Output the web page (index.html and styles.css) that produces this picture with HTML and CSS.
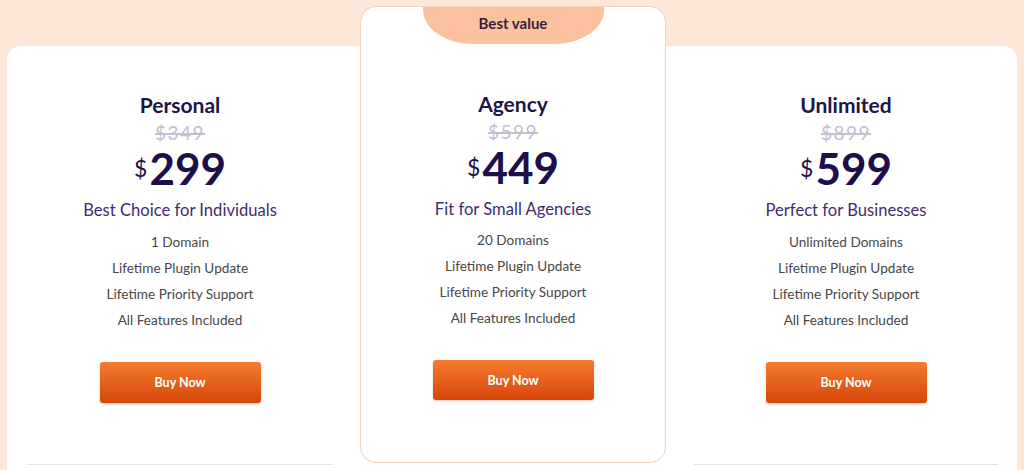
FILE: index.html
```html
<!DOCTYPE html>
<html lang="en">
<head>
  <meta charset="UTF-8" />
  <meta name="viewport" content="width=device-width, initial-scale=1.0"/>
  <title>Pricing</title>
  <link rel="stylesheet" href="styles.css">
</head>
<body>
  <div class="board">
    <div class="plan">
      <h2 class="plan-name">Personal</h2>
      <div class="old-price">$349</div>
      <div class="price"><span class="currency">$</span>299</div>
      <p class="plan-note">Best Choice for Individuals</p>
      <ul class="features">
        <li>1 Domain</li>
        <li>Lifetime Plugin Update</li>
        <li>Lifetime Priority Support</li>
        <li>All Features Included</li>
      </ul>
      <button class="buy-btn">Buy Now</button>
    </div>

    <div class="plan plan-featured">
      <div class="badge">Best value</div>
      <h2 class="plan-name">Agency</h2>
      <div class="old-price">$599</div>
      <div class="price"><span class="currency">$</span>449</div>
      <p class="plan-note">Fit for Small Agencies</p>
      <ul class="features">
        <li>20 Domains</li>
        <li>Lifetime Plugin Update</li>
        <li>Lifetime Priority Support</li>
        <li>All Features Included</li>
      </ul>
      <button class="buy-btn">Buy Now</button>
    </div>

    <div class="plan">
      <h2 class="plan-name">Unlimited</h2>
      <div class="old-price">$899</div>
      <div class="price"><span class="currency">$</span>599</div>
      <p class="plan-note">Perfect for Businesses</p>
      <ul class="features">
        <li>Unlimited Domains</li>
        <li>Lifetime Plugin Update</li>
        <li>Lifetime Priority Support</li>
        <li>All Features Included</li>
      </ul>
      <button class="buy-btn">Buy Now</button>
    </div>
  </div>
</body>
</html>
```

FILE: styles.css
```css
/* ======= Page ======= */
body {
  margin: 0;
  background: #fde7d8;
  font-family: Lato, "Noto Sans", sans-serif;
  text-align: center;
  overflow: hidden;
}

.board {
  display: grid;
  grid-template-columns: 346px 305px 344px;
  column-gap: 8px;
  align-items: start;
  margin: 46px 7px 0 7px;
  height: 440px;
  background: #fff;
  border-radius: 14px 14px 0 0;
}

/* ======= Plan column ======= */
.plan {
  display: flex;
  flex-direction: column;
  align-items: center;
  margin: 0 20px;
  padding: 45px 0 61px;
  border-bottom: 1px solid #e4e2e2;
}

.plan-featured {
  margin: -40px 0 0 -1px;
  padding: 0 0 62px;
  border: 1.5px solid #f0d3bd;
  border-radius: 16px;
  background: #fff;
}
.plan-featured .features {
  margin-top: 6px;
}
.plan-featured .buy-btn {
  height: 40px;
}

.badge {
  width: 181px;
  height: 37px;
  line-height: 33px;
  margin-bottom: 46px;
  background: #fcc29f;
  border-radius: 0 0 50px 50px / 0 0 34px 34px;
  color: #3a1d3c;
  font-size: 15px;
  font-weight: 700;
}

.plan-name {
  margin: 0;
  font-size: 21px;
  line-height: 28px;
  font-weight: 700;
  color: #1e1445;
}

.old-price {
  margin-top: 1px;
  font-size: 19px;
  line-height: 26px;
  letter-spacing: 1.5px;
  color: #c4bed0;
  text-decoration: line-through;
  text-decoration-thickness: 2px;
}

.price {
  display: flex;
  align-items: flex-start;
  font-size: 44px;
  line-height: 44px;
  font-weight: 700;
  color: #1c0f4b;
}
.currency {
  font-size: 23px;
  line-height: 22px;
  font-weight: 400;
  margin: 11px 2px 0 0;
}

.plan-note {
  margin: 8px 0 0;
  font-size: 16.6px;
  line-height: 24px;
  color: #3e2d6d;
}

.features {
  list-style: none;
  margin: 7px 0 0;
  padding: 0;
}
.features li {
  font-size: 13.6px;
  line-height: 26px;
  color: #474747;
}

.buy-btn {
  width: 161px;
  height: 41px;
  margin-top: 29px;
  border: none;
  border-radius: 3px;
  background: linear-gradient(#f47c2d, #d6460b);
  box-shadow: 0 1px 2px rgba(150, 60, 10, 0.3);
  color: #fff;
  font-family: inherit;
  font-size: 12.5px;
  font-weight: 700;
  cursor: pointer;
}
```
